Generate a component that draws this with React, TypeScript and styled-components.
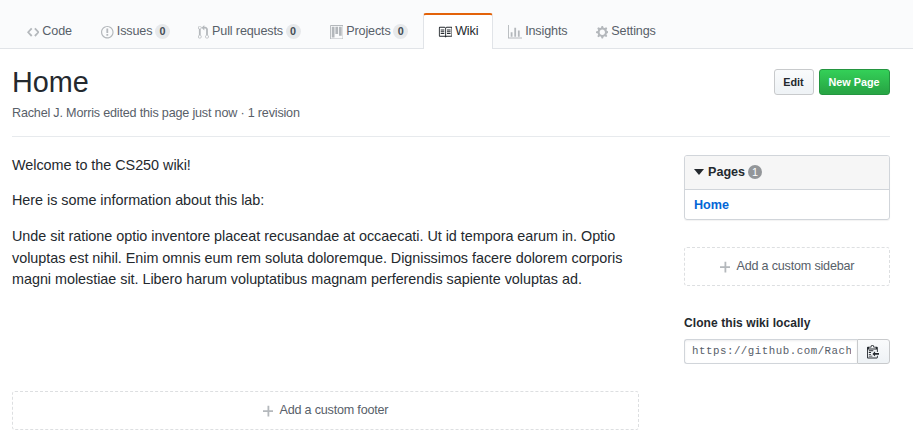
import React from "react";
import styled, { createGlobalStyle } from "styled-components";

const GlobalStyle = createGlobalStyle`
  * { box-sizing: border-box; }
  html, body { margin: 0; padding: 0; background: #fff; overflow: hidden; }
  body {
    font-family: "Liberation Sans", Arial, sans-serif;
    font-size: 12.6px;
    line-height: 1.5;
    color: #24292e;
  }
`;

const ICONS = {
  code: { w: 14, d: "M9.5 3L8 4.5 11.5 8 8 11.5 9.5 13 14 8 9.5 3zm-5 0L0 8l4.5 5L6 11.5 2.5 8 6 4.5 4.5 3z" },
  issue: { w: 14, d: "M7 2.3c3.14 0 5.7 2.56 5.7 5.7s-2.56 5.7-5.7 5.7A5.71 5.71 0 0 1 1.3 8c0-3.14 2.56-5.7 5.7-5.7zM7 1C3.14 1 0 4.14 0 8s3.14 7 7 7 7-3.14 7-7-3.14-7-7-7zm1 3H6v5h2V4zm0 6H6v2h2v-2z" },
  pull: { w: 12, d: "M11 11.28V5c-.03-.78-.34-1.47-.94-2.06C9.46 2.35 8.78 2.03 8 2H7V0L4 3l3 3V4h1c.27.02.48.11.69.31.21.2.3.42.31.69v6.28A1.993 1.993 0 0 0 10 15a1.993 1.993 0 0 0 1-3.72zm-1 2.92c-.66 0-1.2-.55-1.2-1.2 0-.65.55-1.2 1.2-1.2.65 0 1.2.55 1.2 1.2 0 .65-.55 1.2-1.2 1.2zM4 3c0-1.11-.89-2-2-2a1.993 1.993 0 0 0-1 3.72v6.56A1.993 1.993 0 0 0 2 15a1.993 1.993 0 0 0 1-3.72V4.72c.59-.34 1-.98 1-1.72zm-.8 10c0 .66-.55 1.2-1.2 1.2-.65 0-1.2-.55-1.2-1.2 0-.65.55-1.2 1.2-1.2.65 0 1.2.55 1.2 1.2zM2 4.2C1.34 4.2.8 3.65.8 3c0-.65.55-1.2 1.2-1.2.65 0 1.2.55 1.2 1.2 0 .65-.55 1.2-1.2 1.2z" },
  project: { w: 15, d: "M10 12h3V2h-3v10zm-4-2h3V2H6v8zm-4 4h3V2H2v12zm-1 1h13V1H1v14zM14 0H1a1 1 0 0 0-1 1v14a1 1 0 0 0 1 1h13a1 1 0 0 0 1-1V1a1 1 0 0 0-1-1z" },
  book: { w: 16, d: "M3 5h4v1H3V5zm0 3h4V7H3v1zm0 2h4V9H3v1zm11-5h-4v1h4V5zm0 2h-4v1h4V7zm0 2h-4v1h4V9zm2-6v9c0 .55-.45 1-1 1H9.5l-1 1-1-1H2c-.55 0-1-.45-1-1V3c0-.55.45-1 1-1h5.5l1 1 1-1H15c.55 0 1 .45 1 1zm-8 .5L7.5 3H2v9h6V3.5zm7-.5H9.5l-.5.5V12h6V3z" },
  graph: { w: 16, d: "M16 14v1H0V0h1v14h15zM5 13H3V8h2v5zm4 0H7V3h2v10zm4 0h-2V6h2v7z" },
  gear: { w: 14, d: "M14 8.77v-1.6l-1.94-.64-.45-1.09.88-1.84-1.13-1.13-1.81.91-1.09-.45-.69-1.92h-1.6l-.63 1.94-1.11.45-1.84-.88-1.13 1.13.91 1.81-.45 1.09L0 7.23v1.59l1.94.64.45 1.09-.88 1.84 1.13 1.13 1.81-.91 1.09.45.69 1.92h1.59l.63-1.94 1.11-.45 1.84.88 1.13-1.13-.92-1.81.47-1.09L14 8.75v.02zM7 11c-1.66 0-3-1.34-3-3s1.34-3 3-3 3 1.34 3 3-1.34 3-3 3z" },
  plus: { w: 12, d: "M12 9H7v5H5V9H0V7h5V2h2v5h5v2z" },
  clippy: { w: 14, d: "M2 13h4v1H2v-1zm5-6H2v1h5V7zm2 3V8l-3 3 3 3v-2h5v-2H9zM4.5 9H2v1h2.5V9zM2 12h2.5v-1H2v1zm9 1h1v2c-.02.28-.11.52-.3.7-.19.18-.42.28-.7.3H1c-.55 0-1-.45-1-1V4c0-.55.45-1 1-1h3c0-1.11.89-2 2-2 1.11 0 2 .89 2 2h3c.55 0 1 .45 1 1v5h-1V6H1v9h10v-2zM2 5h8c0-.55-.45-1-1-1H8c-.55 0-1-.45-1-1s-.45-1-1-1-1 .45-1 1-.45 1-1 1H3c-.55 0-1 .45-1 1z" },
};
type IconName = keyof typeof ICONS;

const Svg = styled.svg`
  display: block;
  flex: none;
  fill: currentColor;
`;

function Icon({ name, height = 14.4 }: { name: IconName; height?: number }) {
  const { w, d } = ICONS[name];
  return (
    <Svg width={(w * height) / 16} height={height} viewBox={`0 0 ${w} 16`} aria-hidden="true">
      <path fillRule="evenodd" d={d} />
    </Svg>
  );
}

const TabBar = styled.nav`
  display: flex;
  align-items: flex-end;
  height: 49px;
  padding-left: 12px;
  background: #fafbfc;
  border-bottom: 1px solid #e1e4e8;
`;

const Tab = styled.a<{ $active?: boolean; $width: number }>`
  display: flex;
  align-items: center;
  width: ${(p) => p.$width}px;
  height: 36px;
  margin-bottom: -1px;
  padding: 0 0 2px 13.55px;
  white-space: nowrap;
  letter-spacing: -0.14px;
  color: ${(p) => (p.$active ? "#24292e" : "#586069")};
  background: ${(p) => (p.$active ? "#fff" : "transparent")};
  border: solid ${(p) => (p.$active ? "#e1e4e8" : "transparent")};
  border-width: 2px 1px 0;
  border-top-color: ${(p) => (p.$active ? "#e36209" : "transparent")};
  border-radius: 3px 3px 0 0;
`;

const TabIcon = styled.span<{ $active?: boolean }>`
  margin: 2px 3.2px 0 0;
  color: ${(p) => (p.$active ? "#24292e" : "#b4b8bc")};
`;

const Counter = styled.span`
  margin-left: 2.6px;
  padding: 2px 4.5px;
  font-size: 10.8px;
  font-weight: 700;
  line-height: 11px;
  letter-spacing: 0;
  color: #444d56;
  background: #e7e9eb;
  border-radius: 18px;
`;

const Page = styled.main`
  width: 878px;
  margin-left: 12px;
`;

const Header = styled.header`
  display: flex;
  justify-content: space-between;
  height: 88px;
  padding-top: 14px;
  border-bottom: 1px solid #e7eaed;
`;

const Title = styled.h1`
  margin: 0;
  font-size: 28.8px;
  font-weight: 400;
  line-height: 38px;
`;

const Meta = styled.p`
  margin: 3px 0 0;
  line-height: 19px;
  letter-spacing: -0.19px;
  color: #586069;
`;

const Actions = styled.div`
  display: flex;
  gap: 5px;
  padding-top: 6px;
`;

const Button = styled.button<{ $primary?: boolean }>`
  height: 26px;
  width: ${(p) => (p.$primary ? 71 : 40)}px;
  padding: 0 1px 0 0;
  font: 700 10.8px/18px "Liberation Sans", Arial, sans-serif;
  color: ${(p) => (p.$primary ? "#fff" : "#24292e")};
  background: ${(p) => (p.$primary ? "linear-gradient(#34d058, #28a745 90%)" : "linear-gradient(#fafbfc, #eff3f6 90%)")};
  border: 1px solid ${(p) => (p.$primary ? "#249540" : "#c8cacc")};
  border-radius: 3px;
`;

const Columns = styled.div`
  display: flex;
  justify-content: space-between;
`;

const Article = styled.article`
  width: 627px;
  height: 254px;
  padding-top: 17.8px;
  font-size: 14.4px;
  line-height: 21.6px;
  letter-spacing: -0.033px;
`;

const Paragraph = styled.p`
  margin: 0 0 14.1px;
`;

const Line = styled.span`
  display: block;
  white-space: nowrap;
`;

const Sidebar = styled.aside`
  width: 206px;
  padding-top: 18px;
`;

const PagesBox = styled.section`
  height: 65px;
  margin-bottom: 27px;
  border: 1px solid #d1d5da;
  border-radius: 3px;
  box-shadow: 0 1px 1px rgba(0, 0, 0, 0.05);
`;

const PagesHeader = styled.h2`
  display: flex;
  align-items: center;
  height: 34px;
  margin: 0;
  padding-left: 9px;
  font-size: 12.6px;
  background: #f6f6f6;
  border-bottom: 1px solid #d1d5da;
  border-radius: 2px 2px 0 0;
`;

const Caret = styled.span`
  margin: -1px 4px 0 0;
  border: 5px solid transparent;
  border-top: 6px solid #24292e;
  border-bottom: 0;
`;

const RoundCount = styled.span`
  width: 14px;
  height: 14px;
  margin: -1px 0 0 3px;
  font-size: 10.8px;
  font-weight: 400;
  line-height: 14px;
  text-align: center;
  color: #fff;
  background: #939699;
  border-radius: 50%;
`;

const PageLink = styled.a`
  display: block;
  padding-left: 9px;
  font-weight: 700;
  line-height: 31px;
  color: #0366d6;
`;

const AddSection = styled.a`
  display: flex;
  align-items: center;
  justify-content: center;
  gap: 6px;
  height: 39px;
  padding-bottom: 1px;
  letter-spacing: -0.2px;
  color: #586069;
  border: 1px dashed #dddfe1;
  border-radius: 3px;
`;

const PlusIcon = styled.span`
  margin-top: 3px;
  color: #b4b8bc;
`;

const CloneTitle = styled.h2`
  margin: 27px 0 6px;
  font-size: 12px;
  line-height: 20px;
  letter-spacing: 0.08px;
`;

const CloneGroup = styled.div`
  display: flex;
  height: 25px;
`;

const CloneUrl = styled.div`
  width: 173px;
  padding: 0 6px 0 7px;
  border: 1px solid #d1d5da;
  border-right: 0;
  border-radius: 3px 0 0 3px;
  box-shadow: inset 0 1px 2px rgba(27, 31, 35, 0.075);
`;

const CloneText = styled.div`
  overflow: hidden;
  white-space: nowrap;
  font: 10.8px/22px "Liberation Mono", monospace;
  letter-spacing: 0.5px;
  color: #586069;
`;

const CopyButton = styled.button`
  display: flex;
  align-items: center;
  justify-content: center;
  width: 33px;
  padding: 0 1px 0 0;
  color: #24292e;
  background: linear-gradient(#fafbfc, #eff3f6 90%);
  border: 1px solid #c8cacc;
  border-radius: 0 3px 3px 0;
`;

const TABS: { icon: IconName; label: string; width: number; count?: number; active?: boolean }[] = [
  { icon: "code", label: "Code", width: 74.5 },
  { icon: "issue", label: "Issues", width: 97, count: 0 },
  { icon: "pull", label: "Pull requests", width: 131.5, count: 0 },
  { icon: "project", label: "Projects", width: 108, count: 0 },
  { icon: "book", label: "Wiki", width: 70, active: true },
  { icon: "graph", label: "Insights", width: 88 },
  { icon: "gear", label: "Settings", width: 90 },
];

export default function App() {
  return (
    <>
      <GlobalStyle />
      <TabBar>
        {TABS.map((t) => (
          <Tab key={t.label} $active={t.active} $width={t.width}>
            <TabIcon $active={t.active}><Icon name={t.icon} /></TabIcon>
            {t.label}
            {t.count !== undefined && <Counter>{t.count}</Counter>}
          </Tab>
        ))}
      </TabBar>
      <Page>
        <Header>
          <div>
            <Title>Home</Title>
            <Meta>Rachel J. Morris edited this page just now · 1 revision</Meta>
          </div>
          <Actions>
            <Button>Edit</Button>
            <Button $primary>New Page</Button>
          </Actions>
        </Header>
        <Columns>
          <div>
            <Article>
              <Paragraph>Welcome to the CS250 wiki!</Paragraph>
              <Paragraph>Here is some information about this lab:</Paragraph>
              <Paragraph>
                <Line>Unde sit ratione optio inventore placeat recusandae at occaecati. Ut id tempora earum in. Optio</Line>
                <Line>voluptas est nihil. Enim omnis eum rem soluta doloremque. Dignissimos facere dolorem corporis</Line>
                <Line>magni molestiae sit. Libero harum voluptatibus magnam perferendis sapiente voluptas ad.</Line>
              </Paragraph>
            </Article>
            <AddSection><PlusIcon><Icon name="plus" /></PlusIcon>Add a custom footer</AddSection>
          </div>
          <Sidebar>
            <PagesBox>
              <PagesHeader><Caret />Pages<RoundCount>1</RoundCount></PagesHeader>
              <PageLink>Home</PageLink>
            </PagesBox>
            <AddSection><PlusIcon><Icon name="plus" /></PlusIcon>Add a custom sidebar</AddSection>
            <CloneTitle>Clone this wiki locally</CloneTitle>
            <CloneGroup>
              <CloneUrl><CloneText>https://github.com/Rach</CloneText></CloneUrl>
              <CopyButton aria-label="Copy"><Icon name="clippy" /></CopyButton>
            </CloneGroup>
          </Sidebar>
        </Columns>
      </Page>
    </>
  );
}
